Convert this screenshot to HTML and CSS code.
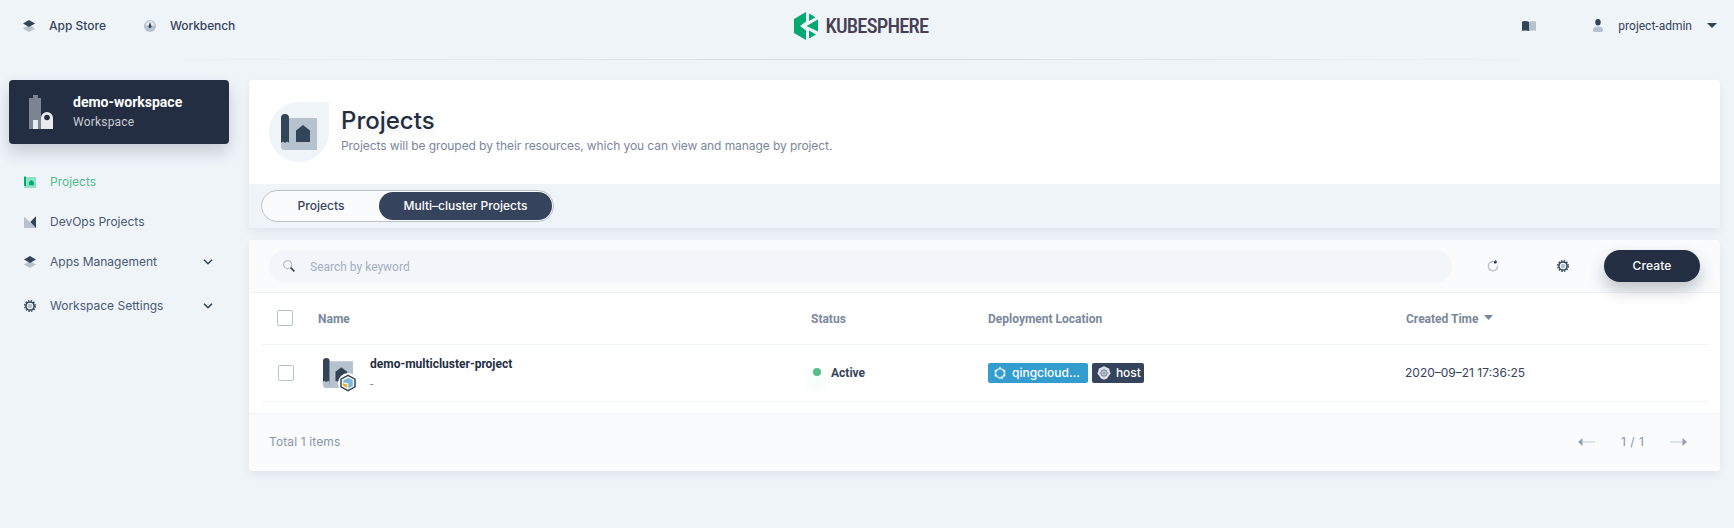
FILE: index.html
```
<!DOCTYPE html>
<html lang="en">
<head>
<meta charset="utf-8">
<title>KubeSphere</title>
<link rel="stylesheet" href="styles.css">
</head>
<body>
<svg class="defs" aria-hidden="true">
  <symbol id="layers" viewBox="0 0 12 12"><path d="M0 8.400 6 5l6 3.400L6 12z" fill="#b6c2cd"/><path d="M0 3.400 6 0l6 3.400L6 7z" fill="#324558"/></symbol>
  <symbol id="gear" viewBox="0 0 12 12"><circle cx="6" cy="6" r="5.300" fill="none" stroke="#324558" stroke-width="1.400" stroke-dasharray="1.500 1.280"/><circle cx="6" cy="6" r="4.100" fill="none" stroke="#324558" stroke-width="1.500"/><circle cx="6" cy="6" r="2.300" fill="#b6c2cd"/></symbol>
  <symbol id="project" viewBox="0 0 36 36"><path d="M5 4h31v32H4z" fill="#b6c2cd"/><path d="M0 4a4 4 0 0 1 8 0v28H0z" fill="#324558"/><path d="M8 4v25h1V4z" fill="#b6c2cd"/><path d="M0 29c1-2 2.500-1.500 4 0 1.500-1.500 3-2 4 0v7H4a4 4 0 0 1-4-4z" fill="#b6c2cd"/><path d="M15 16.500 22 11l7 5.500V28H15z" fill="#324558"/></symbol>
  <symbol id="chevron" viewBox="0 0 10 6"><path d="M1 .8 5 4.800 9 .8" fill="none" stroke="#324558" stroke-width="1.500"/></symbol>
</svg>
<header class="header">
  <nav class="header-nav">
    <a class="nav-link nav-store"><svg width="12" height="12"><use href="#layers"/></svg><span>App Store</span></a>
    <a class="nav-link nav-bench"><svg width="12" height="12" viewBox="0 0 12 12"><circle cx="6" cy="6" r="6" fill="#b6c2cd"/><path d="M1.500 5.500a4.500 4.500 0 0 1 9 0z" fill="#e3e9ef"/><path d="M6 2 7.500 6.500a1.500 1.500 0 0 1-3 0z" fill="#324558"/></svg><span>Workbench</span></a>
  </nav>
  <svg class="logo" width="140" height="28" viewBox="0 0 140 28">
    <path d="M0 7 12 0v9.500L6 14l6 4.500V28L0 21z" fill="#00a971"/>
    <path d="M15 1.500 21.500 5.200 15 9zM24 7.500v12L12.500 14zM15 18.500l7 4-7 4z" fill="#00a971"/>
    <text class="logo-text" x="31.500" y="21.300" textLength="103.500" lengthAdjust="spacing">KUBESPHERE</text>
  </svg>
  <div class="header-user">
    <svg width="14" height="10" viewBox="0 0 14 10"><path d="M0 .5Q4-.5 7 .8V10Q4 9 0 9.800z" fill="#324558"/><path d="M7 .8Q10-.5 14 .5v9.300Q10 9 7 10z" fill="#b6c2cd"/></svg>
    <svg class="user-icon" width="10" height="13" viewBox="0 0 10 13"><path d="M0 10.500Q0 7.500 5 7.500t5 3v1.300L8.800 13H1.200L0 11.800z" fill="#b6c2cd"/><ellipse cx="5" cy="3.300" rx="2.700" ry="3.300" fill="#324558"/></svg>
    <span class="user-name">project-admin</span>
    <svg width="10" height="5" viewBox="0 0 10 5"><path d="M0 0h10L5 5z" fill="#324558"/></svg>
  </div>
</header>
<div class="layout">
  <aside class="sidebar">
    <div class="workspace">
      <svg width="24" height="34" viewBox="0 0 24 34"><path d="M0 3h4V0h5v3h3v31H0z" fill="#7c8391"/><path d="M4 25h5v9H4zM12 34V23a6 6 0 0 1 12 0v11z" fill="#e8eaee"/><circle cx="18" cy="22.500" r="2.800" fill="#242e42"/></svg>
      <div><div class="workspace-name">demo-workspace</div><div class="workspace-type">Workspace</div></div>
    </div>
    <ul class="menu">
      <li class="menu-item active"><svg width="12" height="12" viewBox="0 0 12 12"><path d="M2 1h10v11H0z" fill="#90e0c5"/><path d="M0 .5h2V10H0zM5 6l2.300-2L9.800 6v3.300H5z" fill="#00aa72"/></svg><span>Projects</span></li>
      <li class="menu-item"><svg width="12" height="12" viewBox="0 0 12 12"><path d="M0 .5 12 12H0z" fill="#b6c2cd"/><path d="M12 .3V12L6.300 6z" fill="#324558"/></svg><span>DevOps Projects</span></li>
      <li class="menu-item"><svg width="12" height="12"><use href="#layers"/></svg><span>Apps Management</span><svg class="chevron" width="10" height="6"><use href="#chevron"/></svg></li>
      <li class="menu-item last"><svg width="12" height="12"><use href="#gear"/></svg><span>Workspace Settings</span><svg class="chevron" width="10" height="6"><use href="#chevron"/></svg></li>
    </ul>
  </aside>
  <main class="main">
    <section class="banner">
      <div class="banner-info">
        <div class="banner-icon"><svg width="36" height="36"><use href="#project"/></svg></div>
        <div><h1 class="title">Projects</h1><p class="desc">Projects will be grouped by their resources, which you can view and manage by project.</p></div>
      </div>
      <div class="tabs"><div class="switch"><span class="tab tab-first">Projects</span><span class="tab tab-on">Multi–cluster Projects</span></div></div>
    </section>
    <section class="panel">
      <div class="toolbar">
        <div class="search"><svg width="12" height="12" viewBox="0 0 12 12"><circle cx="4.600" cy="4.600" r="4" fill="none" stroke="#b6c2cd" stroke-width="1.200"/><path d="m7.600 7.600 3.800 3.800" stroke="#324558" stroke-width="1.500"/></svg><span>Search by keyword</span></div>
        <svg class="refresh" width="12" height="12" viewBox="0 0 12 12"><path d="M7.500 1.700A4.700 4.700 0 1 0 10.700 6" fill="none" stroke="#b6c2cd" stroke-width="1.400"/><path d="M7 3.500V1.500L8.800 0 9.300 1.300 10.300 1 9.300 3.500z" fill="#324558"/></svg>
        <svg class="config" width="12" height="12"><use href="#gear"/></svg>
        <button class="create">Create</button>
      </div>
      <div class="table">
        <div class="row row-head">
          <span class="box"></span><span>Name</span><span>Status</span><span>Deployment Location</span>
          <span class="th-time">Created Time<svg width="9" height="5" viewBox="0 0 9 5"><path d="M0 0h9L4.500 5z" fill="#79879c"/></svg></span>
        </div>
        <div class="row row-body">
          <span class="box"></span>
          <div class="cell-name">
            <div class="proj-icon"><svg width="30" height="30"><use href="#project"/></svg>
              <svg class="cluster-badge" width="20" height="20" viewBox="0 0 20 20"><circle cx="10" cy="10" r="10" fill="#fff"/><path d="m10 2.300 7 3.900v7.600l-7 3.900-7-3.900V6.200z" fill="#fff" stroke="#324558" stroke-width="1.500"/><path d="m5.300 7.300 5-2.500 4.500 2.200v6l-4.600 2.500V10.200L5.300 9.400z" fill="#7eb8dc"/><path d="m5 10.200 4.200 1.200v3.700L5 12.700z" fill="#f5a623"/></svg></div>
            <div class="proj-text"><div class="proj-name">demo-multicluster-project</div><div class="proj-desc">-</div></div>
          </div>
          <div class="cell-status"><i class="dot"></i><span>Active</span></div>
          <div class="cell-location">
            <span class="tag tag-blue"><svg width="12" height="13" viewBox="0 0 12 13"><path d="m6 1.200 4.500 2.500v5L6 11.200 1.500 8.700v-5z" fill="none" stroke="#b5dcef" stroke-width="1.800"/><path d="M6 0v2.200M1 3.200l2 1.200M11 3.200l-2 1.200M1 9l2-1.200M11 9 9 7.800" stroke="#fff" stroke-width="1.300"/><path d="m5.500 10 3.500 2.800V9.500z" fill="#c9e6f4"/></svg><span>qingcloud…</span></span>
            <span class="tag tag-dark"><svg width="14" height="14" viewBox="0 0 14 14"><path d="m7 .3 5 2.200 1.500 5L10 12.500 7 13.700l-3-1.200L.5 7.500l1.500-5z" fill="#e1e5eb"/><circle cx="7" cy="7" r="3.200" fill="none" stroke="#7a8595" stroke-width="1"/><path d="M7 2.500v9M2.500 7h9M3.800 3.800l6.400 6.400M10.200 3.800l-6.400 6.400" stroke="#8d97a6" stroke-width=".8"/></svg><span>host</span></span>
          </div>
          <span class="cell-time">2020–09–21 17:36:25</span>
        </div>
      </div>
      <footer class="footer">
        <span class="total">Total 1 items</span>
        <div class="pager"><svg width="17" height="8" viewBox="0 0 17 8"><path d="M4 4h13" stroke="#dce2e9" stroke-width="2"/><path d="M0 4 4.500 0v8z" fill="#96a2b0"/></svg><span class="page">1 / 1</span><svg width="17" height="8" viewBox="0 0 17 8"><path d="M0 4h13" stroke="#dce2e9" stroke-width="2"/><path d="M17 4 12.500 0v8z" fill="#96a2b0"/></svg></div>
      </footer>
    </section>
  </main>
</div>
</body>
</html>
```
FILE: styles.css
```
* { box-sizing: border-box; }
body { margin: 0; height: 528px; background: #eff4f9; font: 12px/20px Roboto, sans-serif; color: #36435c; overflow: hidden; }
svg { display: block; flex: none; }
span { white-space: nowrap; }
.defs { width: 0; height: 0; position: absolute; }
.header { height: 60px; padding: 0 17px 8px 23px; display: grid; grid-template-columns: 1fr 140px 1fr; align-items: center; border-bottom: 1px solid; border-image: linear-gradient(to right, #eff4f9 8%, #d5dce4 45%, #d5dce4 55%, #eff4f9 90%) 1; }
.header-nav, .nav-link, .header-user { display: flex; align-items: center; }
.nav-link, .menu-item, .title, .desc, .tab, .create, .tag, .cell-time, .total, .page { font-family: Inter, sans-serif; }
.nav-link { gap: 14px; font-weight: 500; }
.nav-store { width: 121px; }
.nav-bench { letter-spacing: -.1px; }
.logo { margin-left: -6px; overflow: visible; }
.logo-text { font: 500 20.5px "Roboto Condensed", Roboto, sans-serif; font-stretch: condensed; fill: #483f55; }
.header-user { justify-content: flex-end; }
.user-icon { margin-left: 57px; }
.user-name { margin: 0 15px; }
.layout { display: flex; gap: 20px; padding: 20px 14px 0 9px; }
.sidebar { width: 220px; flex: none; }
.workspace { height: 64px; padding-left: 20px; display: flex; align-items: center; gap: 20px; background: #242e42; border-radius: 4px; box-shadow: 0 8px 16px rgba(36,46,66,.2); color: #fff; }
.workspace-name { font-size: 14px; font-weight: 700; }
.workspace-type { color: #c8ccd3; letter-spacing: .2px; }
.menu { list-style: none; margin: 18px 0 0; padding: 0 13px 0 15px; }
.menu-item { height: 40px; display: flex; align-items: center; gap: 14px; color: #4a5974; }
.menu-item.active { color: #55bc8a; }
.menu-item.last { margin-top: 4px; }
.chevron { margin: 0 3px 0 auto; }
.main { flex: 1; min-width: 0; }
.banner, .panel { border-radius: 4px; background: #fff; box-shadow: 0 4px 8px rgba(36,46,66,.07); overflow: hidden; }
.banner { height: 148px; }
.banner-info { height: 104px; padding: 22px 20px; display: flex; gap: 12px; }
.banner-icon { width: 60px; height: 60px; display: grid; place-items: center; background: #eff4f9; border-radius: 50% 0 50% 50%; }
.title { margin: 3px 0 0; font-size: 24px; line-height: 32px; font-weight: 500; color: #242e42; text-shadow: 0 4px 8px rgba(36,46,66,.1); }
.desc { margin: -1px 0 0; color: #79879c; letter-spacing: -.08px; }
.tabs { height: 44px; padding: 6px 12px; background: #eff4f9; }
.switch { width: 293px; height: 32px; padding: 1px; display: flex; border: 1px solid #b8c2cd; border-radius: 16px; background: #f9fbfd; }
.tab { height: 28px; line-height: 28px; border-radius: 14px; text-align: center; font-weight: 500; }
.tab-first { width: 116px; }
.tab-on { width: 173px; color: #fff; background: #36435c; }
.panel { height: 231px; margin-top: 12px; }
.toolbar { height: 53px; padding: 10px 20px; display: flex; align-items: flex-start; background: #f9fbfd; border-bottom: 1px solid #eff4f9; }
.search { flex: 1; height: 32px; padding-left: 14px; display: flex; align-items: center; gap: 15px; border-radius: 16px; background: #f2f6fb; color: #a4afbf; }
.search span { padding-top: 2px; }
.refresh { margin: 10px 0 0 35px; }
.config { margin: 10px 0 0 58px; }
.create { width: 96px; height: 32px; margin-left: 35px; padding: 0; border: 0; border-radius: 16px; background: #242e42; color: #fff; font-weight: 500; font-size: 12px; line-height: 30px; letter-spacing: .1px; box-shadow: 0 8px 16px rgba(36,46,66,.28); }
.table { height: 120px; padding: 0 12px; }
.row { display: grid; align-items: center; border-bottom: 1px solid #eff4f9; }
.row-head { height: 52px; padding-left: 16px; grid-template-columns: 41px 493px 177px 418px 1fr; color: #79879c; font-weight: 700; }
.row-body { height: 57px; padding-left: 17px; grid-template-columns: 45px 488px 177px 417px 1fr; }
.box { width: 16px; height: 16px; border: 1px solid #b8c2cd; border-radius: 2px; background: #fff; }
.row-head .box { margin-top: -2px; }
.th-time { display: flex; gap: 5px; }
.th-time svg { margin-top: 6px; }
.cell-name, .cell-status, .cell-location { display: flex; align-items: center; }
.cell-name { gap: 17px; }
.proj-icon { position: relative; }
.cluster-badge { position: absolute; left: 15px; top: 15px; }
.proj-text { padding-top: 1px; }
.proj-name { color: #242e42; font-weight: 700; }
.proj-desc { color: #79879c; }
.cell-status { gap: 10px; padding-left: 2px; font-weight: 700; }
.dot { width: 8px; height: 8px; margin-top: -2px; border-radius: 50%; background: #55bc8a; box-shadow: 0 8px 16px rgba(85,188,138,.35); }
.cell-location { gap: 4px; }
.tag { height: 20px; display: flex; align-items: center; border-radius: 2px; color: #fff; font-weight: 500; }
.tag-blue { width: 100px; padding-left: 6px; gap: 6px; background: #329dce; }
.tag-dark { width: 52px; padding-left: 5px; gap: 5px; background: #36435c; letter-spacing: -.1px; }
.footer { height: 58px; padding: 0 33px 2px 20px; display: flex; justify-content: space-between; align-items: center; background: #f9fbfd; border-top: 1px solid #eff4f9; color: #8a96a9; }
.total { letter-spacing: .12px; }
.pager { display: flex; align-items: center; }
.page { width: 75px; text-align: center; word-spacing: 1px; }
```
